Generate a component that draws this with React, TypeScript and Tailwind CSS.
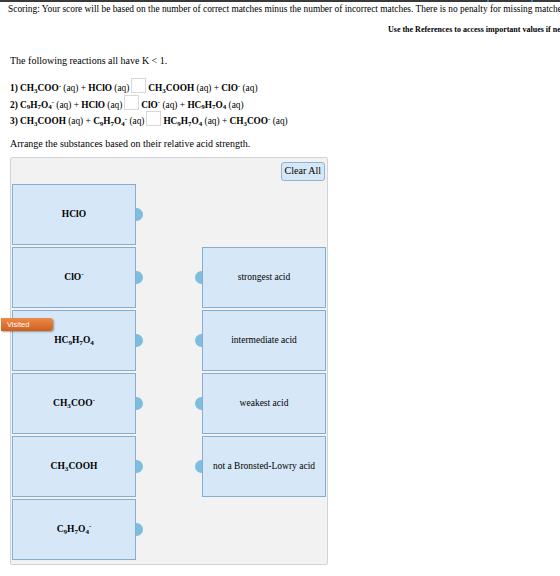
import React from "react";

type Item = { key: string; label: React.ReactNode };

const serif = { fontFamily: '"Liberation Serif", "Times New Roman", serif' };

const acids: Item[] = [
  { key: "hclo", label: <>HClO</> },
  { key: "clo", label: <>ClO<sup>-</sup></> },
  { key: "hc9", label: <>HC<sub>9</sub>H<sub>7</sub>O<sub>4</sub></> },
  { key: "ch3coo", label: <>CH<sub>3</sub>COO<sup>-</sup></> },
  { key: "ch3cooh", label: <>CH<sub>3</sub>COOH</> },
  { key: "c9", label: <>C<sub>9</sub>H<sub>7</sub>O<sub>4</sub><sup>-</sup></> },
];

// right column starts on the second row
const targets: (string | null)[] = [
  null,
  "strongest acid",
  "intermediate acid",
  "weakest acid",
  "not a Bronsted-Lowry acid",
  null,
];

function Blank() {
  return (
    <span className="inline-block align-middle w-[15px] h-[15px] border border-[#d8d8d8] bg-white mx-[2px] -mt-[6px]" />
  );
}

function Aq() {
  return <span className="font-normal"> (aq)</span>;
}

function Plus() {
  return <span className="font-normal"> + </span>;
}

export default function App() {
  return (
    <div className="w-[560px] h-[576px] overflow-hidden bg-white text-black" style={serif}>
      {/* top strip */}
      <div className="h-[2px] bg-[#3a3a3a] relative">
        <div className="absolute left-[487px] top-0 w-[2px] h-[2px] bg-[#3c79b8]" />
        <div className="absolute left-[531px] top-0 w-[2px] h-[2px] bg-[#3c79b8]" />
      </div>

      <div className="pl-[8px] pt-[1px] text-[9.4px] leading-[12px] whitespace-nowrap">
        Scoring: Your score will be based on the number of correct matches minus the number of incorrect matches. There is no penalty for missing matches.
      </div>
      <div className="mt-[10px] pl-[388px] text-[8px] leading-[10px] font-bold whitespace-nowrap">
        Use the References to access important values if needed for this question.
      </div>

      <div className="pl-[10px] text-[10px]">
        <p className="mt-[20px] leading-[12px]">The following reactions all have K &lt; 1.</p>

        <div className="mt-[13px] font-bold text-[9.3px]">
          <div className="h-[16.5px] leading-[16.5px]">
            1) CH<sub>3</sub>COO<sup>-</sup><Aq /><Plus />HClO<Aq />
            <Blank />
            CH<sub>3</sub>COOH<Aq /><Plus />ClO<sup>-</sup><Aq />
          </div>
          <div className="h-[16.5px] leading-[16.5px]">
            2) C<sub>9</sub>H<sub>7</sub>O<sub>4</sub><sup>-</sup><Aq /><Plus />HClO<Aq />
            <Blank />
            ClO<sup>-</sup><Aq /><Plus />HC<sub>9</sub>H<sub>7</sub>O<sub>4</sub><Aq />
          </div>
          <div className="h-[16.5px] leading-[16.5px]">
            3) CH<sub>3</sub>COOH<Aq /><Plus />C<sub>9</sub>H<sub>7</sub>O<sub>4</sub><sup>-</sup><Aq />
            <Blank />
            HC<sub>9</sub>H<sub>7</sub>O<sub>4</sub><Aq /><Plus />CH<sub>3</sub>COO<sup>-</sup><Aq />
          </div>
        </div>

        <p className="mt-[8px] leading-[12px]">Arrange the substances based on their relative acid strength.</p>
      </div>

      {/* matching area */}
      <div className="relative ml-[10px] mt-[7px] w-[318px] bg-[#f2f2f2] border border-[#cfd4d8] rounded-[2px] p-px pb-[4px]">
        <div className="flex justify-end pt-[3px] pr-px">
          <button className="h-[19px] px-[3px] text-[10px] leading-none bg-[#d6e8f7] border border-[#8fb3d2] rounded-[3px]" style={serif}>
            Clear All
          </button>
        </div>

        <div className="mt-[3px] flex flex-col gap-[2px]">
          {acids.map((a, i) => (
            <div key={a.key} className="flex items-center">
              <div className="w-[124px] h-[61px] flex items-center justify-center bg-[#d6e8f7] border border-[#86aed0] text-[9.5px] font-bold">
                <span>{a.label}</span>
              </div>
              <div className="w-[7px] h-[13px] rounded-r-full bg-[#7dbde0]" />
              <div className="flex-1 flex justify-end">
                {targets[i] && <div className="w-[7px] h-[13px] rounded-l-full bg-[#7dbde0]" />}
              </div>
              {targets[i] ? (
                <div className="w-[124px] h-[61px] flex items-center justify-center bg-[#d6e8f7] border border-[#86aed0] text-[9.5px]">
                  {targets[i]}
                </div>
              ) : (
                <div className="w-[124px]" />
              )}
            </div>
          ))}
        </div>

        {/* visited tag over the third row */}
        <div
          className="absolute -left-[10px] top-[160px] w-[52px] h-[13px] pl-[6px] text-[7.5px] leading-[13px] text-white rounded-r-[3px] bg-gradient-to-b from-[#ec8a48] to-[#d0601c] shadow-[1px_1px_2px_rgba(0,0,0,0.35)]"
          style={{ fontFamily: '"Liberation Sans", Arial, sans-serif' }}
        >
          Visited
        </div>
      </div>
    </div>
  );
}
